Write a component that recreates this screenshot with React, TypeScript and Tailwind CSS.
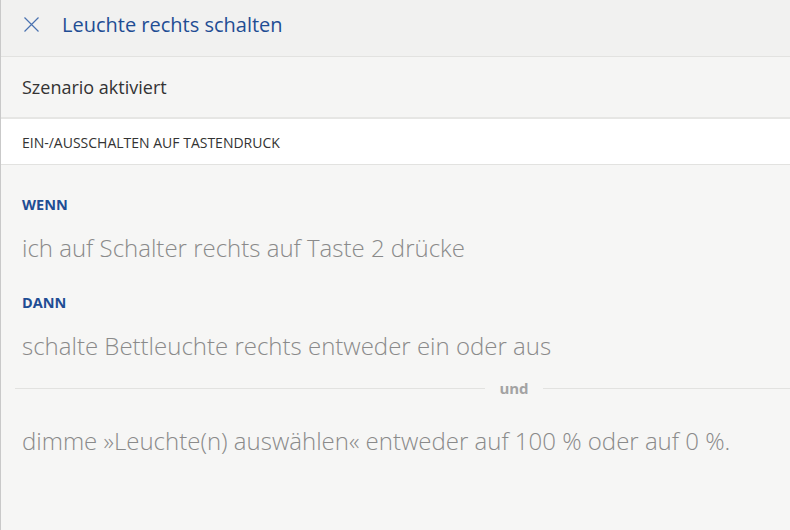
import React from "react";

export default function App() {
  const font = { fontFamily: '"Open Sans", "Noto Sans", sans-serif' };
  return (
    <div className="w-[790px] h-[530px] bg-[#f6f6f5] border-l border-[#c9c9c9] overflow-hidden" style={font}>
      <div className="w-[1040px]">
        <div className="h-[57px] bg-[#f1f1f0] border-b border-[#e2e2e0] flex items-start pt-[12px]">
          <svg className="ml-[23px] mt-[5px]" width="15" height="15" viewBox="0 0 15 15">
            <path d="M0.5 0.5 L14.5 14.5 M14.5 0.5 L0.5 14.5" stroke="#4a72b0" strokeWidth="1.2" fill="none" />
          </svg>
          <span className="ml-[23px] text-[20px] text-[#1f4d94] leading-[26px]">Leuchte rechts schalten</span>
        </div>
        <div className="h-[62px] bg-[#f5f5f4] border-b-2 border-[#e6e6e4] flex items-center pl-[21px]">
          <span className="text-[18px] text-[#333333] leading-[24px]">Szenario aktiviert</span>
        </div>
        <div className="h-[46px] bg-white border-b border-[#e2e2e0] flex items-center pl-[21px] pt-[2px]">
          <span className="text-[14px] text-[#333333] leading-[18px]">EIN-/AUSSCHALTEN AUF TASTENDRUCK</span>
        </div>
        <div className="pl-[21px] pt-[31px]">
          <div className="text-[14.5px] font-bold text-[#1f4d94] leading-[18px]">WENN</div>
          <div className="mt-[18px] text-[24px] font-light text-[#8a8a8a] leading-[32px]">ich auf Schalter rechts auf Taste 2 drücke</div>
          <div className="mt-[30px] text-[14.5px] font-bold text-[#1f4d94] leading-[18px]">DANN</div>
          <div className="mt-[18px] text-[24px] font-light text-[#8a8a8a] leading-[32px]">schalte Bettleuchte rechts entweder ein oder aus</div>
        </div>
        <div className="mt-[17px] ml-[14px] w-[998px] flex items-center">
          <div className="flex-1 h-px bg-[#e2e2e0]" />
          <span className="px-[14px] text-[15px] font-bold text-[#a3a3a3] leading-[18px]">und</span>
          <div className="flex-1 h-px bg-[#e2e2e0]" />
        </div>
        <div className="pl-[21px] mt-[28px] text-[24px] font-light text-[#8a8a8a] leading-[32px]">dimme »Leuchte(n) auswählen« entweder auf 100 % oder auf 0 %.</div>
      </div>
    </div>
  );
}
